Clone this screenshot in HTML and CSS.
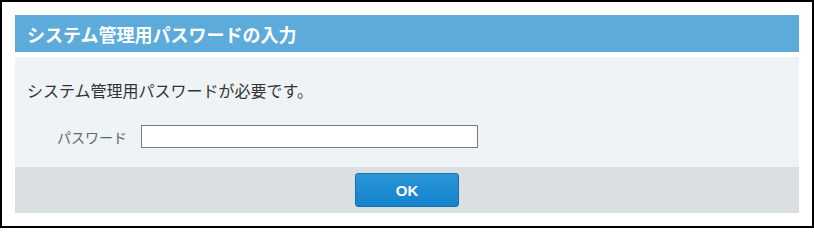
FILE: index.html
```html
<!DOCTYPE html>
<html lang="ja">
<head>
<meta charset="utf-8">
<title>システム管理用パスワードの入力</title>
<link rel="stylesheet" href="styles.css">
</head>
<body>
<div class="frame">
  <div class="dialog-header">システム管理用パスワードの入力</div>
  <div class="dialog-body">
    <p class="message">システム管理用パスワードが必要です。</p>
    <div class="field-row">
      <label class="field-label" for="pw">パスワード</label>
      <input class="field-input" id="pw" type="password">
    </div>
  </div>
  <div class="dialog-footer">
    <button class="btn-ok" type="button">OK</button>
  </div>
</div>
</body>
</html>
```

FILE: styles.css
```css
html, body {
  margin: 0;
  padding: 0;
  background: #fff;
}
.frame {
  width: 814px;
  height: 228px;
  box-sizing: border-box;
  border: 2px solid #000;
  padding: 13px;
  background: #fff;
  font-family: "Noto Sans CJK JP", "Noto Sans", sans-serif;
}
.dialog-header {
  height: 37px;
  background: #5dabdb;
  color: #fff;
  font-size: 18px;
  font-weight: bold;
  display: flex;
  align-items: center;
  padding-left: 12px;
}
.dialog-body {
  margin-top: 5px;
  height: 110px;
  box-sizing: border-box;
  background: #eef3f6;
  padding: 21px 12px 0;
}
.message {
  margin: 0;
  font-size: 16px;
  line-height: 24px;
  color: #333;
}
.field-row {
  display: flex;
  align-items: center;
  margin-top: 23px;
  margin-left: 30px;
}
.field-label {
  width: 84px;
  font-size: 14px;
  color: #666;
}
.field-input {
  width: 337px;
  height: 23px;
  box-sizing: border-box;
  border: 1px solid #7a7a7a;
  background: #fff;
  margin: 0;
  padding: 0 4px;
}
.dialog-footer {
  height: 46px;
  background: #dadfe2;
  display: flex;
  align-items: center;
  justify-content: center;
}
.btn-ok {
  width: 104px;
  height: 34px;
  box-sizing: border-box;
  border: 1px solid #1a6fae;
  border-radius: 3px;
  background: linear-gradient(#2b96d7, #1383ce);
  color: #fff;
  font-family: "Liberation Sans", Arial, sans-serif;
  font-weight: bold;
  font-size: 15px;
  padding: 0;
}
```
